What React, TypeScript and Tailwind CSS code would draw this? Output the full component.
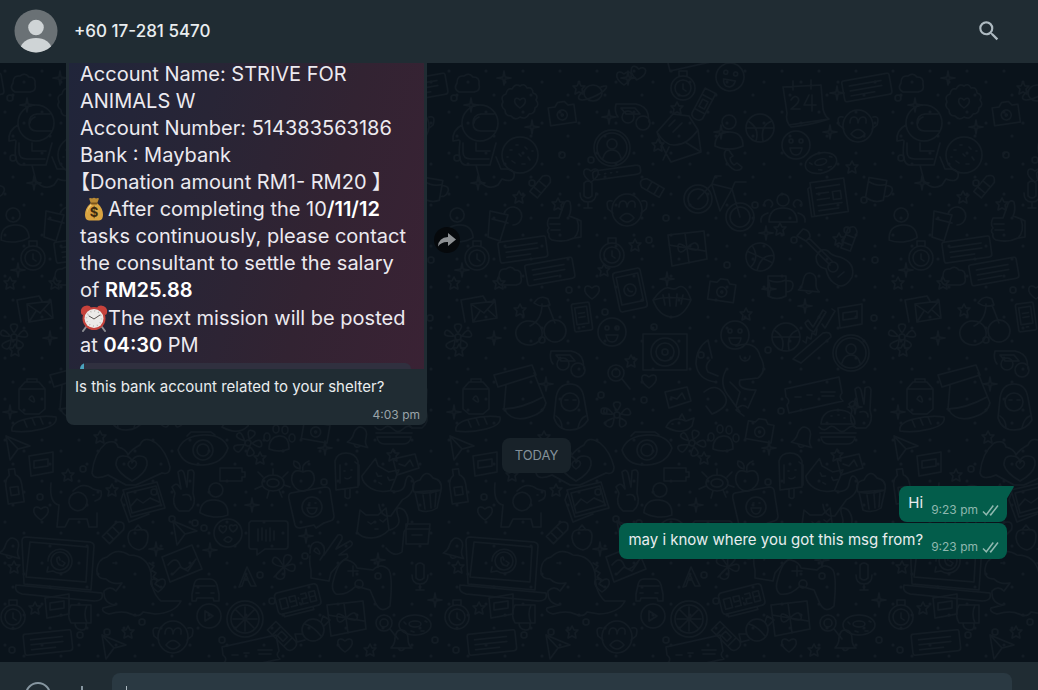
import React from 'react';
import { MdSearch } from 'react-icons/md';

type Doodle = [kind: string, x: number, y: number, rotate?: number];

const SHAPES: Record<string, string> = {
  ring: 'M-18 0a18 18 0 1 0 36 0a18 18 0 1 0 -36 0',
  heart: 'M0 7C-12 -1 -7 -10 0 -4C7 -10 12 -1 0 7Z',
  badge:
    'M0 -17q5 -3 7 2q6 -1 6 5q6 2 3 7q4 5 -1 8q0 6 -6 6q-3 6 -9 3q-5 4 -9 -1q-6 0 -6 -6q-5 -4 -2 -8q-3 -6 3 -8q1 -6 6 -5q3 -6 8 -3ZM0 5C-9 -1 -5 -8 0 -3C5 -8 9 -1 0 5Z',
  camera: 'M-13 -7h7l3 -4h7l3 4h6v18h-26ZM-5 2a5 5 0 1 0 10 0a5 5 0 1 0 -10 0M-1 2a1 1 0 1 0 2 0a1 1 0 1 0 -2 0',
  planet: 'M-9 0a9 8 0 1 0 18 0a9 8 0 1 0 -18 0M-8 -3C-20 6 -14 10 0 4S18 -10 8 -6',
  face: 'M-14 0a14 14 0 1 0 28 0a14 14 0 1 0 -28 0M-7 -4a2 2 0 1 0 4 0a2 2 0 1 0 -4 0M3 -4a2 2 0 1 0 4 0a2 2 0 1 0 -4 0M-6 3h12q-1 7 -6 7t-6 -7Z',
  astronaut:
    'M-18 -20a18 18 0 1 0 36 0a18 18 0 1 0 -36 0M14 -29h-13q-8 1 -8 9t8 8h14M-6 -20q0 -4 5 -6M-18 -18q-10 5 -9 16l6 -1M-20 -2q-3 24 6 24h24l6 -22M-17 0v9q0 7 8 7h18M-4 0v8h14M-4 22l4 16q8 10 18 4l4 -6q10 4 12 -2t-6 -8h-7l-5 -12',
  cookie: 'M-18 0a18 18 0 1 0 36 0a18 18 0 1 0 -36 0M-10 -5h2M-4 -10h2M5 -8l2 2M8 2l2 3M-8 6l3 2M2 9h3M-1 -1l2 2M-13 2h1M12 -4h1',
  buggy: 'M-17 -10h20q10 2 12 10l1 8M-17 -10q-2 8 2 13M-11 3a6 6 0 1 0 12 0a6 6 0 1 0 -12 0M3 9a7 7 0 1 0 14 0a7 7 0 1 0 -14 0M-12 -6h14l5 6h-14Z',
  envelope: 'M-20 -8L-4 -26l16 2l9 14l3 22l-30 10q-9 -14 -14 -30ZM-20 -8q8 14 18 13q12 0 23 -15M-14 20l6 -13M24 12L8 2M-8 -14l6 -6M-4 -8l9 -9',
  pill: 'M-6 -16h12v28q-1 4 -6 4t-6 -4ZM-6 -9h12M-3 -5h6v8h-6ZM-6 7h12',
  person: 'M-7 -10a7 7 0 1 0 14 0a7 7 0 1 0 -14 0M-14 14q0 -14 14 -14t14 14q-6 3 -14 3t-14 -3Z',
  contact:
    'M-18 0a18 18 0 1 0 36 0a18 18 0 1 0 -36 0M-15 0a15 15 0 1 0 30 0a15 15 0 1 0 -30 0M-5 -4a5 5 0 1 0 10 0a5 5 0 1 0 -10 0M-9 10q2 -8 9 -8t9 8',
  phone: 'M-6 -11q-5 2 -3 9q3 9 10 12q6 1 7 -3l-5 -4l-3 2q-4 -3 -4 -7l3 -2Z',
  pen: 'M-5 -10q5 -8 10 0v20h-10ZM-5 -4h10M-5 4h10',
  bar: 'M-24 -4q0 -3 4 -3h40q4 0 4 3v3q0 3 -4 3h-40q-4 0 -4 -3ZM-18 -3h1M-12 -3h1M-6 -3h1M0 -3h1',
  mic: 'M-4 -12q4 -4 8 0v13q-4 4 -8 0ZM-8 -2q0 9 8 9t8 -9M0 7v6M-4 13h8',
  bicycle:
    'M-36 -6a14 14 0 1 0 28 0a14 14 0 1 0 -28 0M6 12a14 14 0 1 0 28 0a14 14 0 1 0 -28 0M-32 -6a10 10 0 1 0 20 0a10 10 0 1 0 -20 0M10 12a10 10 0 1 0 20 0a10 10 0 1 0 -20 0M-22 -6l14 -15l20 5l8 28M-8 -21l3 -8h6M12 -16l-12 22l-8 -26M12 -16l3 -7h11',
  thumb: 'M-14 -3h10l5 -14q2 -5 6 -2q2 8 -1 14l8 3q4 12 -3 19q-10 5 -22 2q-4 -2 -3 -6q-3 -3 0 -6q-3 -4 0 -10ZM-13 3h10M-12 9h9M14 -2l4 2v16l-7 1',
  cup: 'M-14 -10l18 4l-8 26l-12 -4ZM-12 -2l16 4M0 -7a9 9 0 1 1 9 11',
  watch: 'M-12 0a12 12 0 1 0 24 0a12 12 0 1 0 -24 0M-8 0a8 8 0 1 0 16 0a8 8 0 1 0 -16 0M0 -4v5l3 2M-4 -12v-5h8v5',
  note: 'M-24 -9q0 -2 2 -2h44q2 0 2 2v16q0 3 -3 3h-43q-2 0 -2 -3ZM-17 -5h32M-17 0h32M-17 5h24',
  cloud: 'M-9 7q-6 -3 -2 -9q0 -8 7 -7q5 -4 9 1q7 0 6 7q2 7 -5 8Z',
  gift: 'M-19 -13l36 -4l3 28l-35 7ZM-18 -3L18 3M-2 -15l4 30M0 0q-10 -8 -9 0t9 0q9 -9 11 -2t-11 2',
  ball: 'M-14 0a14 14 0 1 0 28 0a14 14 0 1 0 -28 0M-12 -7Q0 0 -4 13M12 -7Q0 -3 3 13M-14 0L14 0',
  tablet: 'M-14 -17q0 -3 3 -3h22q3 0 3 3v34q0 3 -3 3h-22q-3 0 -3 -3ZM-11 -15h22v28h-22ZM-6 0a6 6 0 1 0 12 0a6 6 0 1 0 -12 0M-2 -2q0 4 4 4',
  lips: 'M-20 0Q-10 -14 -4 -12T4 -12Q12 -18 18 0Q10 18 -2 17T-20 0ZM-20 0Q-5 -5 18 0M-10 -5l2 10M-4 -6l1 12M4 -6l-1 12M10 -5l-2 9',
  mail: 'M-19 -12l22 -4l3 5M-19 -12l4 22M-9 -8l24 -3l2 17l-24 4ZM-9 -8l13 9l11 -12M-7 10l7 -11M17 6l-9 -8',
  cherries: 'M-8 -24q6 -9 14 -4l2 6q-9 3 -16 -2ZM0 -23q0 16 -12 22M6 -22l7 18M-26 8a12 11 0 1 0 26 -4a12 11 0 1 0 -26 4M2 4a11 11 0 1 0 22 0a11 11 0 1 0 -22 0',
  mobile: 'M-9 -12q0 -2 2 -2h14q2 0 2 2v24q0 2 -2 2h-14q-2 0 -2 -2ZM-6 -10h12v17h-12ZM-3 -4h6M-3 0h6M-1 10h2',
  flower: 'M-3 0a3 3 0 1 0 6 0a3 3 0 1 0 -6 0M0 -4q-7 -9 0 -9t0 9M4 -1q6 -9 9 -3t-9 3M3 3q10 4 4 8t-4 -8M-3 3q-1 12 -7 8t7 -8M-4 -1q-11 1 -9 -4t9 4',
  record: 'M-22 -18h44v36h-44ZM-14 0a14 14 0 1 0 28 0a14 14 0 1 0 -28 0M-9 0a9 9 0 1 0 18 0a9 9 0 1 0 -18 0M-3 0a3 3 0 1 0 6 0a3 3 0 1 0 -6 0',
  calendar: 'M-22 -18l38 -2l2 24q2 8 6 10q-18 6 -38 8q-6 -6 -4 -14ZM-16 20l40 -6M-12 -24v9M6 -25v9M-14 -5q4 -6 7 -2t-7 11h9M4 -10l-5 10h12M7 -10v16',
  monkey: 'M-15 0a15 16 0 1 0 30 0a15 16 0 1 0 -30 0M-15 -9q-7 -2 -4 8l5 4M15 -9q7 -2 4 8l-5 4M-8 -3q0 -6 4 -6t4 6q1 -6 5 -6t3 6M-7 8q7 -9 14 0q-7 8 -14 0',
  donut: 'M-16 0a16 10 0 1 0 32 0a16 10 0 1 0 -32 0M-6 -1a6 3 0 1 0 12 0a6 3 0 1 0 -12 0M-11 -3l2 2M10 -4l2 1M-4 6l3 1M6 6h3',
  news: 'M-18 -16h34v34h-34ZM-18 -12l-3 2v28h6M-13 -10h24M-13 -4h12M-13 2h12M-13 8h24M-13 13h20M3 -4h8v8h-8Z',
  mug: 'M-10 -11h18v20q-9 5 -18 0ZM8 -6q8 -1 7 5t-7 6M-10 -7q9 4 18 0',
  people: 'M-6 -9a6 6 0 1 0 12 0a6 6 0 1 0 -12 0M-14 13q0 -14 14 -14t14 14ZM-18 -3a4 4 0 1 1 6 1M18 -3a4 4 0 1 0 -6 1M-15 4q-8 2 -7 9M15 4q8 2 7 9',
  guitar: 'M-33 -27l6 -7q7 1 7 8l-4 4ZM-24 -22l24 24M-21 -25l24 24M-14 -6q4 -10 12 -6q4 5 12 6q16 6 12 20q-8 14 -18 6q-6 -4 -8 -14q-10 -2 -10 -12M-2 4a5 5 0 1 0 10 0a5 5 0 1 0 -10 0M8 14l6 -5',
  bell: 'M-10 8q4 -4 4 -10q1 -9 7 -8t6 9q0 6 4 9ZM-3 8q3 5 7 0',
  checks: 'M-12 2l5 7l10 -17l3 2l-12 20q-6 -2 -9 -9ZM2 6l3 4l10 -17l-3 -2',
  tub: 'M-12 -9l24 -4v20l-22 4ZM-7 -4l14 -2v7l-14 2Z',
  saw: 'M-20 14l30 -26q8 -2 8 4l-30 26ZM-10 -4l3 2l1 -6l4 2l1 -6l4 2l1 -6',
  jar: 'M-12 -6l6 -7h14l6 7v20l-6 5h-14l-6 -5ZM-12 -6h26M-4 -13v-3h10v3M-2 4q3 -6 5 0t-5 0',
  scarf: 'M-26 -20l38 -10l4 10l-38 12ZM-14 -10l-2 24q8 14 26 8q14 -4 16 -14l-12 -30M-17 14q18 0 40 -12',
  backpack: 'M-14 -10q2 -14 14 -14t14 14l4 22q-6 10 -18 10t-16 -12ZM-9 -6a9 9 0 1 0 18 0a9 9 0 1 0 -18 0M-5 -8h3M3 -8h3M-14 8q6 4 6 12M16 8q-6 2 -8 12',
  bread: 'M-22 6q-2 -8 14 -12t30 -2q2 8 -14 12t-30 2ZM-10 -5l3 7M-2 -7l3 7M6 -8l3 7',
  lens: 'M-9 -2a8 8 0 1 0 16 0a8 8 0 1 0 -16 0M-5 -2a4 4 0 1 0 8 0a4 4 0 1 0 -8 0M5 4l8 10',
  card: 'M-12 -6l22 -5l4 14l-22 7ZM-6 -1l6 2l5 -6l3 6',
  fish: 'M-14 4q6 -12 20 -6l8 -3l-2 8q-10 10 -26 1ZM-8 1h1M-1 -4l3 -5l3 6',
  unicorn: 'M-34 -16q0 -16 12 -24l4 18M-34 -16q2 16 20 18M-20 -20q-6 6 -2 12l10 4M-4 -10q-8 14 4 28l10 14M0 2l10 10l-4 14M-26 12q12 -10 20 2t-12 20l-6 -8M6 -34q20 -6 24 10q8 14 -2 22l-18 2q-4 10 16 10l-8 18q-6 -6 -12 2l8 6M10 -24a5 5 0 1 0 10 0',
  ticket: 'M-28 -8l54 -12l3 16q-4 4 1 8l-54 12l-2 -8q4 -4 -1 -8ZM-18 0h6M-6 -2h5M8 -5h14M9 -1h12',
  burger: 'M-17 -4q1 -14 17 -14t17 14ZM-19 -1q5 5 9 1t9 1t10 0t9 -1M-18 5h36M-17 9q1 7 8 7h18q7 0 8 -7ZM-7 -12h1M0 -13h1M6 -10h1',
  paw: 'M-10 12q0 -12 10 -13t10 13q-10 4 -20 0M-15 0a3 4 0 1 0 6 0a3 4 0 1 0 -6 0M-6 -8a3 4 0 1 0 6 0a3 4 0 1 0 -6 0M3 -7a3 4 0 1 0 6 0a3 4 0 1 0 -6 0M10 1a3 4 0 1 0 6 0a3 4 0 1 0 -6 0',
  hands:
    'M-40 8q2 -20 14 -30q10 -4 12 4q8 2 10 8q4 -6 12 -10q4 -10 16 -2q10 8 14 24q0 8 -8 6l-26 12h-10l-18 -10q-14 6 -16 -2ZM-16 0q0 -10 8 -9q6 0 8 5q2 -5 8 -5q8 0 7 9q-2 9 -15 16q-14 -8 -16 -16M0 4q-6 -4 -3 -7t3 1q2 -4 4 -1t-4 7',
  eye: 'M-25 0Q-20 -14 0 -15T25 -2Q20 14 0 15T-25 0ZM-10 0a10 10 0 1 0 20 0a10 10 0 1 0 -20 0M-6 0a6 6 0 1 0 12 0a6 6 0 1 0 -12 0M-16 -14l4 -4h20l4 3',
  bottle: 'M-3 -18h6v6q5 3 5 10v18h-16v-18q0 -7 5 -10ZM-4 0h8v8h-8Z',
  dog: 'M-26 -20q-2 20 8 22l-2 22h8l4 -8h18l2 8h8v-14M-8 0a9 9 0 1 0 18 -3a9 9 0 1 0 -18 3M-4 -12q10 -10 20 -2l8 2q2 8 -6 10M16 -8h1',
  photo: 'M-20 -12l34 -8l8 26l-34 9ZM-16 -9l29 -7l5 19l-29 8ZM-13 5l7 -8l6 4l7 -5l9 4M8 -10a3 3 0 1 0 6 0a3 3 0 1 0 -6 0M-20 -8l-2 6l8 22l20 -8',
  peace: 'M-12 0l-3 -6q4 -5 7 -1l2 3l-3 -17q4 -4 6 1l3 14l1 -16q5 -3 6 2l-1 20q4 12 -4 18h-10q-8 -6 -4 -18M-4 2q8 -2 8 5',
  battery: 'M-12 -6h22v4h3v5h-3v4h-22Z',
  turtle: 'M-11 0a11 8 0 1 0 22 0a11 8 0 1 0 -22 0M-6 0a6 4 0 1 0 12 0a6 4 0 1 0 -12 0M-10 -6l-5 -5M0 -8v-6M10 -6l5 -5M11 2l6 2M6 7l3 7M-4 8l-2 7M-11 3l-7 3',
  apple: 'M0 -5q-9 -4 -11 4t6 14q5 2 9 0q9 -6 7 -14t-11 -4ZM0 -5q-2 -8 6 -11M-3 -8q-8 -2 -6 -8q7 1 6 8',
  pop: 'M-12 -14q2 -8 11 -8t12 8v26l-22 3ZM-7 -10v18M8 -13l4 3v20M-2 15v7q3 3 5 0v-8M-3 -4h1M4 -5h1M-2 3q3 2 6 -1',
  bubble: 'M-21 -14l34 -6q4 0 5 3l4 26q0 4 -4 5l-6 2l-8 5l-2 -3l-14 3q-4 0 -5 -3l-6 -26q-1 -5 2 -6ZM-10 0a10 10 0 1 0 20 0a10 10 0 1 0 -20 0M-5 1q1 6 5 6t5 -6ZM-3 -4h1M3 -4h1',
  cat: 'M-18 -12l6 5h12l8 -7l3 22q-8 8 -18 8t-14 -6ZM-10 0l3 2l3 -2M2 -2l3 2l3 -3M-3 7h3M12 8q12 -4 8 -14q-4 -12 6 -6q8 10 0 22l-2 20q-8 6 -16 -4',
  laptop: 'M-34 -28l64 5q4 1 4 4l-3 44l-67 -6l-2 -43q0 -4 4 -4ZM-30 -23l58 5l-2 35l-60 -5ZM-44 20l86 8q2 8 -8 8l-72 -7q-8 -2 -6 -9M-12 -4a12 12 0 1 1 5 10l-6 1l1 -5M-9 -4a9 9 0 1 0 18 0a9 9 0 1 0 -18 0M-3 -7q-1 7 6 8l2 -3l-3 -2M-3 -7l2 -1l1 3',
  berry: 'M-10 -2q0 -10 10 -8q10 -2 10 6q0 12 -9 14q-10 -2 -11 -12ZM-4 -10l4 -5l4 5',
  dino: 'M-26 -26q10 -10 22 -2q18 0 22 18q0 20 10 28h20q-6 12 -26 13l-12 -2q-4 6 -12 2t-22 0q-8 -2 -6 -6l12 -3q-12 -2 -11 -14q6 -6 12 0l6 -8q-10 2 -16 -4q-10 0 -9 -10t10 -12M-20 -20h1M16 -20l5 3l-3 4l5 3l-3 4l5 3l-3 4l5 3',
  plane: 'M-10 -12l24 10l-12 3l-8 11ZM2 1l-12 -13',
  love: 'M-14 0a14 14 0 1 0 28 0a14 14 0 1 0 -28 0M-5 0C-12 -4 -8 -10 -5 -6C-2 -10 1 -4 -5 0ZM5 -1C-1 -5 2 -10 5 -7C9 -10 12 -5 5 -1ZM-4 7q4 -6 8 -1q-3 6 -8 1',
  speech: 'M-18 -14h34q3 0 3 3v22q0 3 -3 3h-20l-8 6v-6h-6q-2 0 -2 -3v-23ZM-11 -6v12M-7 -7v12M-3 -5v11M1 -7v13M5 -4v9',
  image: 'M-20 -6l30 -12l10 24l-32 13ZM-14 2q8 -10 12 0t16 -6M-9 11l7 -7l8 4l6 -9',
  letter: 'M-8 10l8 -20l9 19h-5l-3 -6h-4l-2 6ZM-1 -2l2 4h-4Z',
  clover: 'M0 0q-14 -2 -11 -8t11 8q-2 -14 5 -12t-5 12q12 -6 11 1t-11 -1q3 14 -5 12t5 -12M0 0l-10 10',
  car: 'M-13 4l2 -9q1 -6 6 -6h10q5 0 7 6l2 9v7h-5l-1 -3h-16l-1 3h-4ZM-10 -4h20M-9 3h3M6 3h3',
  glove: 'M-20 -2q0 -12 8 -11q8 2 6 12l-4 6M-6 0l14 -20q5 -1 4 4l-6 10l14 -8q4 2 1 5l-12 9l8 -1q2 4 -2 5q-8 6 -14 14l-2 8l-18 -3v-8q-2 -8 -1 -14M-16 -4q2 -6 5 0t-5 0',
  gamepad: 'M-30 2q6 -24 14 -22t10 8l16 2q8 -8 16 0q4 8 1 36q-8 8 -14 -2l-6 -14l-14 -4q-10 10 -20 8q-5 -4 -3 -12M-10 -14v10M-15 -9h10M12 -4a3 3 0 1 0 6 0a3 3 0 1 0 -6 0M-8 4a4 4 0 1 0 8 0a4 4 0 1 0 -8 0',
  clock:
    'M-22 -8q0 -4 4 -4h36q4 0 4 4v14q0 4 -4 4h-36q-4 0 -4 -4ZM-18 -5h7v10h-7ZM-8 -5h6v5h-6ZM-2 0v5h-6M1 -2v1M1 3v1M4 -5h5v5h-5v5h5M12 -5h6v10h-6ZM12 0h6M-17 10v3h30v-3',
  play: 'M-12 0a12 12 0 1 0 24 0a12 12 0 1 0 -24 0M-4 -5v10l8 -5Z',
  citrus: 'M-18 0a18 18 0 1 0 36 0a18 18 0 1 0 -36 0M-14 0a14 14 0 1 0 28 0a14 14 0 1 0 -28 0M-12 0h24M0 -12v24M-9 -9l18 18M9 -9l-18 18',
  candy: 'M-11 0a11 11 0 1 0 22 0a11 11 0 1 0 -22 0M-10 4l-8 0l2 8l8 -2M8 -8l2 -6l7 4l-6 6M-8 -6q8 2 16 12',
  cupcake: 'M-13 0l4 18q9 4 18 -2l4 -18ZM-14 0q-4 -10 6 -12q6 -12 13 -2q10 2 8 12q-14 5 -27 2M-5 3l2 14M2 2l1 14M8 1l-1 14',
  box: 'M-12 -9h24l-2 20h-22ZM-12 -4h24M-6 2h10',
  star: 'M0 -6l2 4h4l-3 3l1 5l-4 -2l-4 2l1 -5l-3 -3h4Z',
  spark: 'M0 -7l1 6l6 1l-6 1l-1 6l-1 -6l-6 -1l6 -1Z',
  dot: 'M-3 0a3 3 0 1 0 6 0a3 3 0 1 0 -6 0',
};

const DOODLES: Doodle[] = [
  ['cloud', 24, 85], ['badge', 76, 103], ['camera', 118, 113, -8], ['planet', 149, 93], ['heart', 194, 73, 10],
  ['watch', 239, 88], ['face', 286, 77, 10], ['astronaut', 36, 143], ['cookie', 76, 155], ['buggy', 189, 114],
  ['envelope', 233, 140], ['pill', 259, 105, 28], ['person', 285, 132, 0], ['contact', 168, 148], ['ball', 316, 128],
  ['phone', 290, 160], ['pen', 96, 187, 40], ['bar', 173, 175, -8], ['pen', 209, 188, -60], ['mic', 144, 195],
  ['bicycle', 276, 205], ['monkey', 183, 210], ['thumb', 119, 221], ['cup', 60, 221], ['watch', 33, 258],
  ['note', 79, 250, -8], ['note', 106, 272, -10], ['cloud', 66, 278], ['watch', 168, 255], ['gift', 243, 248],
  ['ball', 316, 257, 25], ['tablet', 186, 290, -12], ['lips', 229, 300], ['camera', 278, 290, 8], ['mail', 36, 312],
  ['cherries', 98, 327], ['mobile', 138, 317, -8], ['face', 168, 332], ['flower', 14, 337], ['record', 221, 352],
  ['face', 291, 335], ['calendar', 361, 105], ['note', 423, 88, -10], ['monkey', 414, 126], ['face', 352, 145],
  ['donut', 377, 163, -15], ['news', 386, 196, -8], ['mug', 433, 190, 10], ['people', 339, 209], ['guitar', 386, 263],
  ['mug', 334, 287], ['bell', 365, 283, 5], ['checks', 376, 318], ['tub', 406, 317], ['ball', 342, 337],
  ['person', 14, 225, -5], ['contact', 407, 353], ['saw', 369, 345], ['jar', 31, 395], ['scarf', 76, 395],
  ['backpack', 126, 408], ['bread', 34, 425], ['flower', 173, 415], ['lens', 173, 375], ['buggy', 124, 361],
  ['card', 233, 398], ['fish', 236, 423], ['unicorn', 286, 380], ['ticket', 369, 397], ['burger', 394, 428],
  ['bell', 359, 437, 15], ['camera', 316, 430, 10], ['paw', 279, 437], ['hands', 132, 465], ['eye', 203, 450],
  ['bottle', 14, 487, -8], ['dog', 77, 503], ['photo', 143, 502], ['peace', 187, 493], ['person', 215, 500, 5],
  ['flower', 248, 443, 20], ['battery', 232, 474], ['turtle', 273, 483], ['apple', 303, 477], ['pop', 347, 475],
  ['bubble', 312, 507], ['cat', 378, 522], ['cat', 385, 478, 30], ['laptop', 60, 565], ['pen', 113, 533, 45], ['berry', 138, 540],
  ['dino', 133, 583], ['plane', 183, 533], ['love', 228, 533], ['speech', 269, 535], ['image', 182, 563],
  ['letter', 247, 577], ['clover', 284, 567], ['car', 205, 590], ['glove', 330, 555], ['gamepad', 363, 580],
  ['clock', 298, 600, -14], ['play', 209, 616], ['citrus', 245, 619], ['monkey', 173, 637], ['candy', 313, 630],
  ['watch', 13, 617], ['note', 48, 643, -6], ['cupcake', 428, 492], ['box', 418, 533], ['bell', 11, 548, 15],
  ['mic', 420, 577], ['plane', 16, 448], ['tub', 41, 465], ['gift', 346, 618], ['mug', 80, 615, 90],
  ['plane', 112, 647], ['ticket', 250, 655], ['pill', 283, 637, -45], ['lens', 385, 625], ['donut', 415, 625],
  ['peace', 420, 410], ['card', 405, 465], ['bell', 401, 640], ['tub', 57, 607], ['pen', 405, 240, 20],
];

// loose stars, sparks and circles between the large drawings
const FILLERS: Doodle[] = [
  ['spark', 60, 78], ['star', 135, 88], ['spark', 184, 78], ['spark', 27, 105], ['spark', 165, 117], ['star', 233, 108],
  ['spark', 88, 127], ['spark', 277, 132], ['star', 214, 145], ['heart', 147, 175], ['star', 75, 197], ['spark', 34, 183],
  ['star', 114, 204], ['heart', 180, 78], ['dot', 13, 158], ['dot', 88, 183], ['dot', 10, 98], ['dot', 118, 155],
  ['dot', 147, 160], ['star', 10, 283], ['spark', 18, 270], ['star', 55, 283], ['star', 160, 270], ['star', 191, 245],
  ['spark', 223, 279], ['star', 302, 314], ['spark', 325, 289], ['heart', 148, 292], ['star', 76, 310], ['spark', 50, 338],
  ['dot', 98, 340], ['dot', 161, 312], ['dot', 210, 327], ['dot', 125, 290], ['spark', 393, 93], ['spark', 386, 132],
  ['star', 408, 167], ['star', 395, 239], ['star', 336, 229], ['dot', 350, 240], ['dot', 420, 200], ['dot', 431, 260],
  ['spark', 361, 306], ['dot', 403, 230], ['dot', 430, 318], ['spark', 10, 412], ['spark', 102, 384], ['star', 187, 361],
  ['heart', 205, 381], ['star', 15, 350], ['dot', 157, 395], ['dot', 160, 411], ['dot', 200, 400], ['dot', 257, 355],
  ['dot', 337, 411], ['spark', 411, 407], ['star', 100, 437], ['star', 68, 475], ['star', 112, 490], ['heart', 41, 513],
  ['dot', 40, 497], ['dot', 83, 469], ['star', 260, 458], ['spark', 325, 448], ['star', 393, 455], ['dot', 324, 482],
  ['spark', 252, 505], ['spark', 156, 549], ['spark', 210, 550], ['star', 14, 567], ['dot', 195, 523], ['dot', 204, 528],
  ['dot', 172, 519], ['star', 35, 608], ['star', 128, 632], ['heart', 158, 585], ['spark', 306, 536], ['dot', 260, 575],
  ['dot', 305, 556], ['dot', 80, 635], ['dot', 107, 632], ['dot', 12, 650], ['dot', 142, 622], ['spark', 378, 560],
  ['dot', 222, 640], ['dot', 272, 601], ['heart', 345, 645], ['star', 370, 650], ['dot', 435, 640], ['spark', 435, 600],
  ['dot', 324, 350], ['dot', 311, 205], ['spark', 322, 233], ['dot', 283, 265], ['dot', 205, 240], ['dot', 222, 218],
];

const ChatWallpaper = () => (
  <svg className="absolute inset-0 h-full w-full" aria-hidden="true">
    <defs>
      <pattern id="doodles" width="444" height="600" patternUnits="userSpaceOnUse" patternTransform="translate(0 -63)">
        {/* the tile starts below the header, so its upper rows wrap round */}
        {[...DOODLES, ...FILLERS].flatMap(([kind, x, y, rotate = 0]) =>
          [x - 444, x, x + 444].flatMap((cx) =>
            [y, y - 600].map((cy) => (
              <path
                key={`${kind}-${cx}-${cy}`}
                d={SHAPES[kind]}
                transform={`translate(${cx} ${cy}) rotate(${rotate})`}
                fill="none"
                stroke="#131c24"
                strokeWidth="1.5"
                strokeLinecap="round"
                strokeLinejoin="round"
              />
            ))
          )
        )}
      </pattern>
      <pattern id="grain" width="37" height="41" patternUnits="userSpaceOnUse">
        <g fill="#131c24">
          <circle cx="5" cy="8" r="1.5" />
          <circle cx="24" cy="19" r="1.5" />
          <circle cx="13" cy="32" r="1.5" />
        </g>
      </pattern>
    </defs>
    <rect width="100%" height="100%" fill="url(#grain)" />
    <rect width="100%" height="100%" fill="url(#doodles)" />
  </svg>
);

const Avatar = () => (
  <svg viewBox="0 0 44 44" className="h-11 w-11 shrink-0" aria-hidden="true">
    <defs>
      <clipPath id="avatar">
        <circle cx="22" cy="22" r="21.5" />
      </clipPath>
    </defs>
    <g clipPath="url(#avatar)">
      <rect width="44" height="44" fill="#6a7175" />
      <circle cx="22" cy="18.5" r="7.8" fill="#cfd4d6" />
      <ellipse cx="22" cy="40" rx="15.5" ry="11" fill="#cfd4d6" />
    </g>
  </svg>
);

const MoneyBag = () => (
  <svg viewBox="0 0 20 24" className="mr-1 ml-1 inline-block h-6 w-5 align-[-5px]" role="img" aria-label="money bag">
    <path d="M5 1.500q2-1 3 0q2-1.500 4 0q1.500-1 3 0l-2 5h-6z" fill="#b98a35" />
    <path d="M7 6h6q6 5 6 12q0 5-4 5.500h-10q-4-.5-4-5.500q0-7 6-12z" fill="#d9a441" />
    <path d="M7 7q-4 4-4 9q1-5 5-8z" fill="#f0cf7d" />
    <rect x="6.500" y="5.500" width="7" height="2" rx="1" fill="#7c541b" />
    <text x="10" y="20" textAnchor="middle" className="font-['Inter',sans-serif] text-[13px] font-bold" fill="#3d2a10">
      $
    </text>
  </svg>
);

const AlarmClock = () => (
  <svg viewBox="0 0 28 28" className="inline-block h-7 w-7 align-[-7px]" role="img" aria-label="alarm clock">
    <path d="M6 23l-3 4M22 23l3 4" stroke="#8d8f94" strokeWidth="2" strokeLinecap="round" />
    <path d="M1 9q-1-7 6-7.500q3 0 4 2l-8 7.500q-1.500 0-2-2zM27 9q1-7-6-7.500q-3 0-4 2l8 7.500q1.500 0 2-2z" fill="#c8423c" />
    <circle cx="14" cy="14.500" r="11.500" fill="#c5433d" />
    <circle cx="14" cy="14.500" r="9.500" fill="#eceae8" />
    <circle cx="14" cy="14.500" r="7.500" fill="none" stroke="#b9b7b5" strokeWidth="1.500" strokeDasharray="1 2.930" />
    <path d="M9 12l5 3l6-4" fill="none" stroke="#5a5350" strokeWidth="1" strokeLinecap="round" strokeLinejoin="round" />
  </svg>
);

const DoubleTick = () => (
  <svg viewBox="0 0 17 12" className="h-3 w-[17px]" fill="none" stroke="currentColor" strokeWidth="1.500" aria-label="Delivered">
    <path d="M1 7.500l3.300 3.300l7-9.300M8 10l.8.8l7.200-9.300" />
  </svg>
);

const ForwardButton = () => (
  <button type="button" aria-label="Forward" className="flex h-[26px] w-[26px] items-center justify-center rounded-full bg-[#06090c]">
    <svg viewBox="0 0 20 16" className="h-4 w-5" fill="#8d9093">
      <path d="M11 1l8 6.500l-8 6.500v-4q-6.500-.5-10 4.500q.5-9 10-9.500z" />
    </svg>
  </button>
);

interface OutgoingProps {
  text: string;
  time: string;
  tail?: boolean;
}

const OutgoingMessage: React.FC<OutgoingProps> = ({ text, time, tail }) => (
  <div
    className={`relative flex h-9 gap-2 self-end rounded-lg bg-[#035d4b] pr-2 pl-[9px] ${tail ? 'rounded-tr-none' : ''}`}
  >
    {tail && (
      <svg viewBox="0 0 8 13" className="absolute top-0 -right-[7px] h-[13px] w-2" fill="#035d4b" aria-hidden="true">
        <path d="M0 0h7q1.500 0 .5 1.500L1 12.500H0z" />
      </svg>
    )}
    <p className="pt-[7px] text-[15px] leading-5 text-[#e9edef]">{text}</p>
    <p className="flex items-center gap-1 self-end pb-1 text-xs leading-4 text-[#8fb8af]">
      {time}
      <DoubleTick />
    </p>
  </div>
);

const ForwardedPhoto = () => (
  <div className="rounded-t-md bg-[linear-gradient(105deg,#20253a_0%,#282536_35%,#322332_68%,#3a2234_100%)] px-[11px] pt-1">
    <div className="text-xl leading-[27px] text-[#eceaf0]">
      <p>
        Account Name: STRIVE FOR
        <br />
        ANIMALS W
      </p>
      <p>Account Number: 514383563186</p>
      <p>Bank : Maybank</p>
      <p className="[font-feature-settings:'halt']">【Donation amount RM1- RM20 】</p>
      <p>
        <MoneyBag />
        After completing the 10<b className="font-semibold text-white">/11/12</b>
        <br />
        tasks continuously, please contact
        <br />
        the consultant to settle the salary
        <br />
        of <b className="font-semibold text-white">RM25.88</b>
      </p>
      <p>
        <AlarmClock />
        The next mission will be posted
        <br />
        at <b className="font-semibold text-white">04:30</b> PM
      </p>
    </div>
    <div className="mt-1 mr-[2px] h-[6px] overflow-hidden rounded-t-md bg-[#30303f]">
      <div className="h-full w-1 bg-[#4aa3bd]" />
    </div>
  </div>
);

export default function App() {
  return (
    <div className="flex h-screen flex-col overflow-hidden bg-[#0a131b] font-['Inter','Noto_Sans_CJK_SC',sans-serif]">
      <header className="relative z-10 flex h-[63px] shrink-0 items-center gap-4 bg-[#202c33] pr-9 pb-[2px] pl-[14px]">
        <Avatar />
        <h1 className="flex-1 text-[17px] leading-6 font-medium text-[#e9edef]">+60 17-281 5470</h1>
        <button type="button" aria-label="Search" className="text-[#aebac1]">
          <MdSearch className="h-[26px] w-[26px]" />
        </button>
      </header>

      <main className="relative flex min-h-0 flex-1 flex-col justify-end overflow-hidden">
        <ChatWallpaper />
        <div className="relative flex flex-col pr-[31px] pb-[103px] pl-[66px]">
          <div className="flex items-center gap-[7px]">
            <article className="w-[361px] rounded-lg bg-[#202c33] px-[3px] pt-[3px]">
              <ForwardedPhoto />
              <p className="px-[6px] pt-2 text-[15px] leading-5 text-[#e9edef]">Is this bank account related to your shelter?</p>
              <p className="px-1 pt-[10px] pb-[2px] text-right text-xs leading-4 text-[#9aa4a9]">4:03 pm</p>
            </article>
            <ForwardButton />
          </div>

          <p className="my-[13px] self-center rounded-lg bg-[#182229] px-[13px] py-2 text-[13px] leading-[19px] text-[#84919a]">
            TODAY
          </p>

          <div className="flex flex-col gap-px">
            <OutgoingMessage text="Hi" time="9:23 pm" tail />
            <OutgoingMessage text="may i know where you got this msg from?" time="9:23 pm" />
          </div>
        </div>
      </main>

      <footer className="flex h-7 shrink-0 items-start overflow-hidden bg-[#202c33] pr-[26px] pl-[25px]">
        <button type="button" aria-label="Emoji" className="mt-5 text-[#8696a0]">
          <svg viewBox="0 0 26 26" className="h-[26px] w-[26px]" fill="none" stroke="currentColor" strokeWidth="2">
            <circle cx="13" cy="13" r="12" />
            <path d="M7 15q6 7 12 0" />
          </svg>
        </button>
        <button type="button" aria-label="Attach" className="mt-6 ml-[21px] text-[#8696a0]">
          <svg viewBox="0 0 20 20" className="h-5 w-5" fill="none" stroke="currentColor" strokeWidth="2">
            <path d="M10 0v20M0 10h20" />
          </svg>
        </button>
        <div className="relative mt-[11px] ml-5 flex-1">
          <input
            type="text"
            aria-label="Type a message"
            className="h-[42px] w-full rounded-lg bg-[#2a3942] px-[14px] text-[15px] text-[#e9edef] outline-none"
          />
          <span className="absolute top-[13px] left-[14px] h-5 w-px bg-[#aebac1]" />
        </div>
      </footer>
    </div>
  );
}
